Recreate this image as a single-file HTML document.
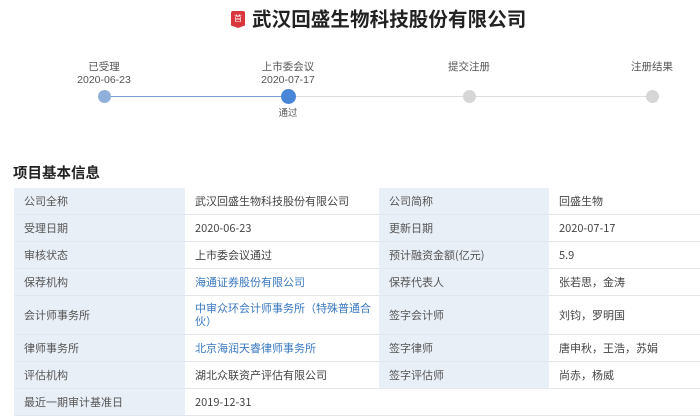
<!DOCTYPE html>
<html><head><meta charset="utf-8"><style>
body{margin:0;width:700px;height:419px;background:#fff;font-family:"Liberation Sans","Noto Sans CJK SC",sans-serif;color:#333;position:relative;overflow:hidden}
.abs{position:absolute}
.lbl{position:absolute;font-size:10.5px;color:#555;text-align:center;width:100px;line-height:13px}
.dot{position:absolute;width:13px;height:13px;border-radius:50%;top:90px}
table{position:absolute;left:14px;top:188px;border-collapse:collapse;font-size:11px;width:686px;font-family:"Noto Sans CJK SC",sans-serif}
td{border-bottom:1px solid #e3e8ef;padding:0 0 0 10px;height:26px;color:#444;vertical-align:middle;line-height:13px}
td.k{background:#e9eff7;color:#555}
a{color:#3a78c0;text-decoration:none}
</style></head><body>
<div class="abs" style="left:231px;top:11px;width:14px;height:17px;background:#d9363e;border-radius:2px 2px 0 0;clip-path:polygon(0 0,100% 0,100% 85%,50% 100%,0 85%)"></div>
<div class="abs" style="left:231px;top:13px;width:14px;text-align:center;color:#fff;font-size:8px;line-height:12px">首</div>
<div class="abs" style="left:252px;top:7px;font-size:19.5px;font-weight:bold;color:#222;line-height:26px;letter-spacing:0.1px">武汉回盛生物科技股份有限公司</div>

<div class="abs" style="left:104px;top:96px;width:184px;height:1px;background:#7a9ed0"></div>
<div class="abs" style="left:288px;top:96px;width:364px;height:1px;background:#ddd"></div>
<div class="dot" style="left:98px;background:#8fb0da"></div>
<div class="dot" style="left:281px;top:89px;width:15px;height:15px;background:#4a86d8"></div>
<div class="dot" style="left:463px;background:#d6d6d6"></div>
<div class="dot" style="left:646px;background:#d6d6d6"></div>
<div class="lbl" style="left:54px;top:61px">已受理<br>2020-06-23</div>
<div class="lbl" style="left:238px;top:61px">上市委会议<br>2020-07-17</div>
<div class="lbl" style="left:238px;top:107px;font-size:9.5px">通过</div>
<div class="lbl" style="left:419px;top:61px">提交注册</div>
<div class="lbl" style="left:602px;top:61px">注册结果</div>

<div class="abs" style="left:13px;top:162px;font-size:14.5px;font-weight:bold;color:#222">项目基本信息</div>

<table>
<colgroup><col style="width:171px"><col style="width:194px"><col style="width:170px"><col></colgroup>
<tr><td class="k">公司全称</td><td>武汉回盛生物科技股份有限公司</td><td class="k">公司简称</td><td>回盛生物</td></tr>
<tr><td class="k">受理日期</td><td>2020-06-23</td><td class="k">更新日期</td><td>2020-07-17</td></tr>
<tr><td class="k">审核状态</td><td>上市委会议通过</td><td class="k">预计融资金额(亿元)</td><td>5.9</td></tr>
<tr><td class="k">保荐机构</td><td><a>海通证券股份有限公司</a></td><td class="k">保荐代表人</td><td>张若思，金涛</td></tr>
<tr><td class="k" style="height:38px">会计师事务所</td><td><a>中审众环会计师事务所（特殊普通合伙）</a></td><td class="k">签字会计师</td><td>刘钧，罗明国</td></tr>
<tr><td class="k">律师事务所</td><td><a>北京海润天睿律师事务所</a></td><td class="k">签字律师</td><td>唐申秋，王浩，苏娟</td></tr>
<tr><td class="k">评估机构</td><td>湖北众联资产评估有限公司</td><td class="k">签字评估师</td><td>尚赤，杨威</td></tr>
<tr><td class="k">最近一期审计基准日</td><td>2019-12-31</td><td></td><td></td></tr>
</table>
</body></html>
